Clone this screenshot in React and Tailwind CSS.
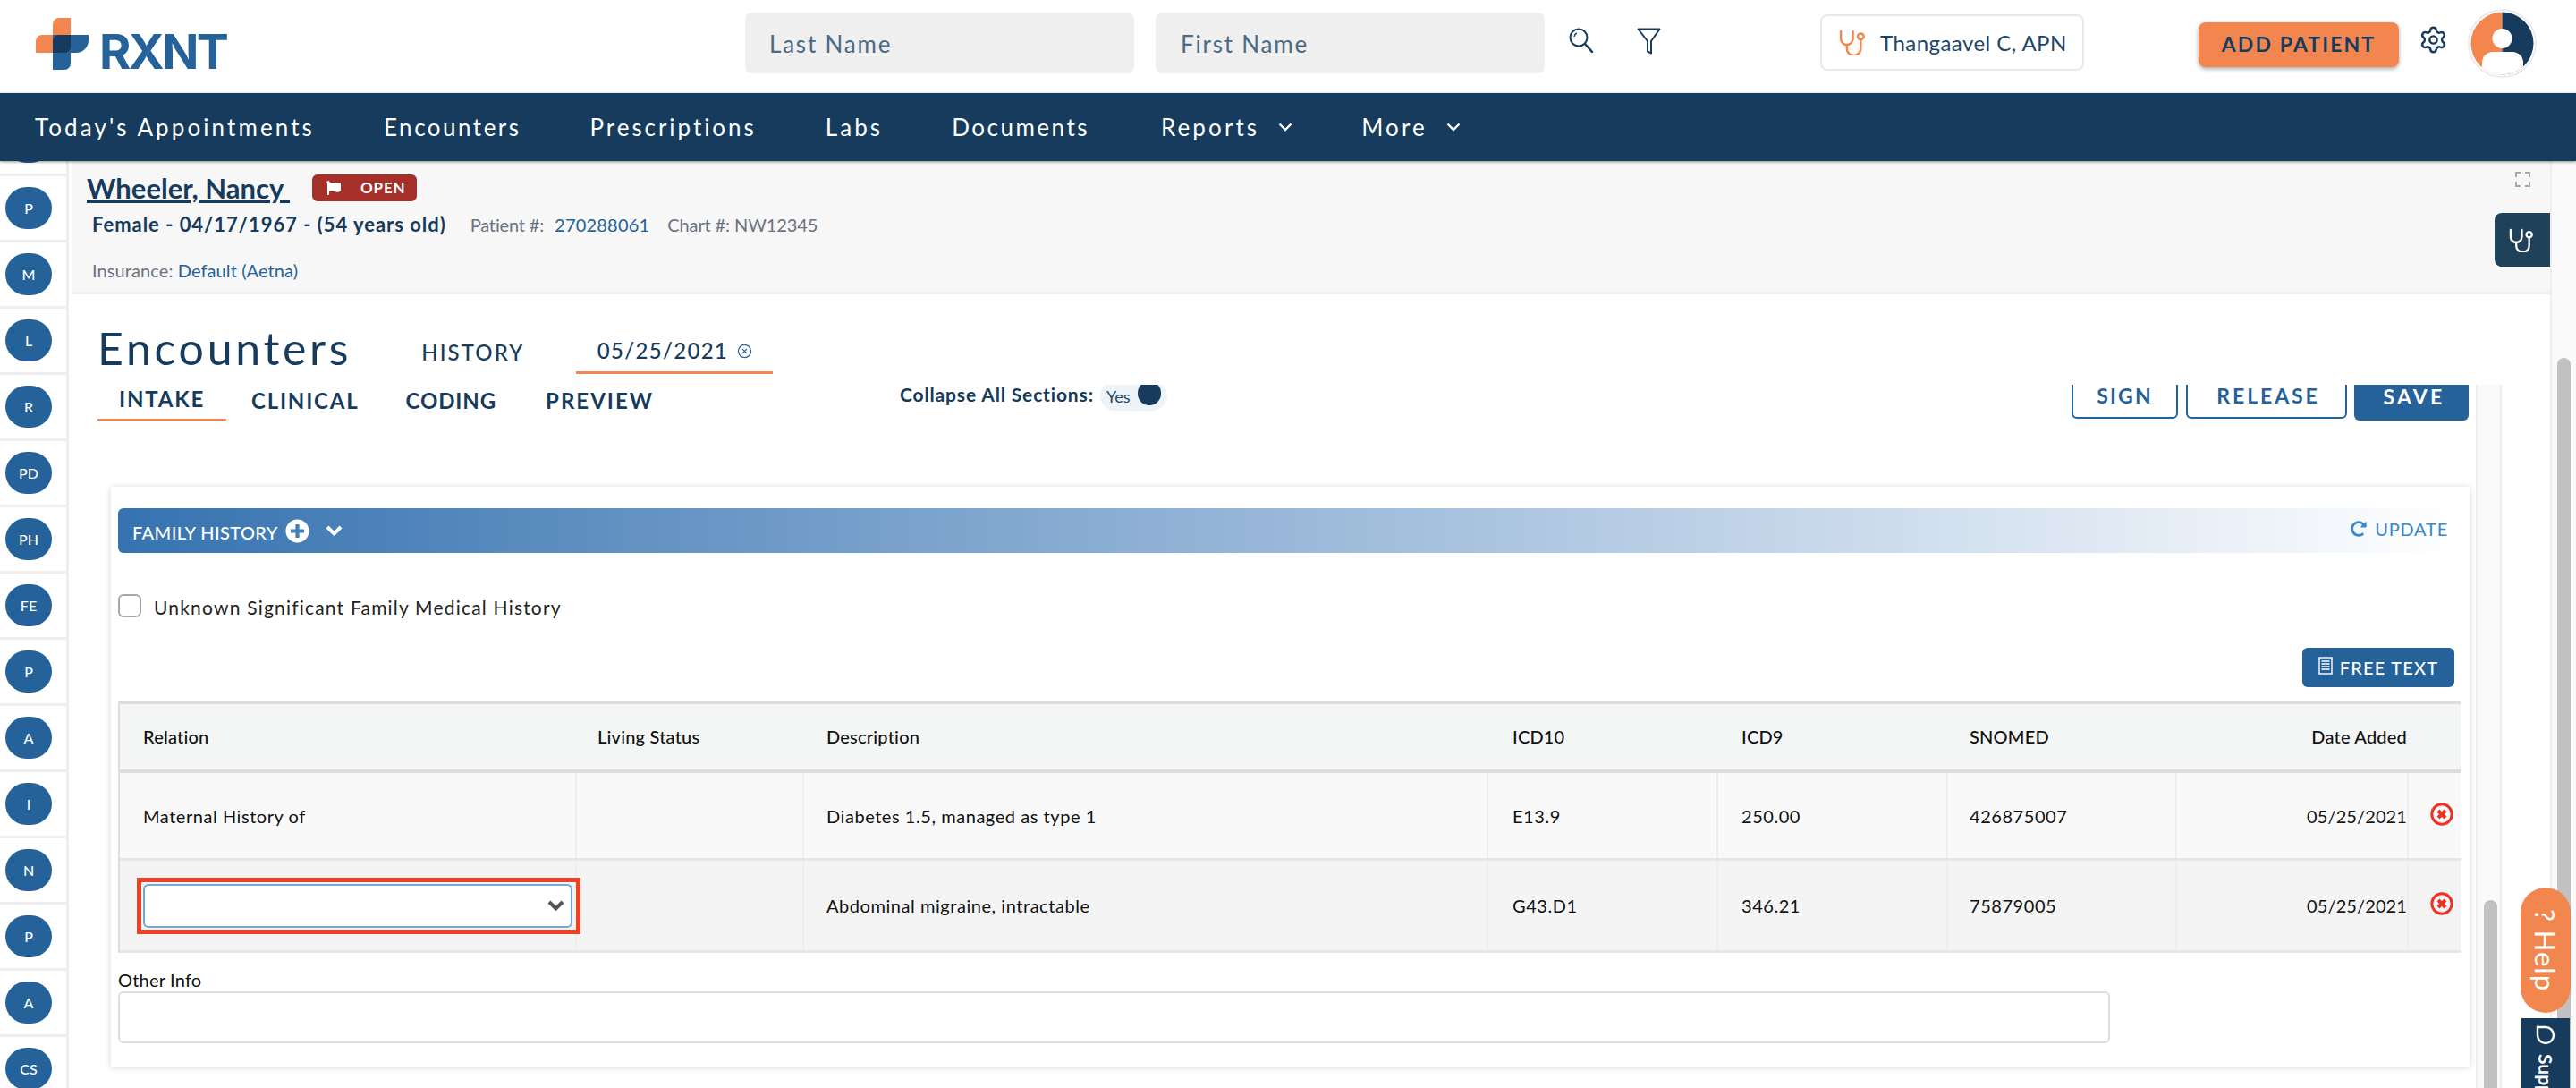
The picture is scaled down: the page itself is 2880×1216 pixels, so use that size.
import React from 'react';
import { FaFlag, FaPlusCircle, FaRedoAlt } from 'react-icons/fa';
import { Settings, CircleX } from 'lucide-react';

const SIDE = ['', 'P', 'M', 'L', 'R', 'PD', 'PH', 'FE', 'P', 'A', 'I', 'N', 'P', 'A', 'CS'];
const COLS = 'grid grid-cols-[509px_254px_765px_257px_257px_256px_259px_60px]';

function StethIcon({ className }) {
  return (
    <svg viewBox="0 0 28 28" fill="none" stroke="currentColor" strokeWidth="2.4" strokeLinecap="round" className={className}>
      <path d="M2 2v8a6.5 6.5 0 0 0 13 0V2" />
      <path d="M8.5 17v3.5a7.5 7.5 0 0 0 15 0V11" />
      <circle cx="23.5" cy="7.5" r="3.2" />
    </svg>
  );
}

function NavChevron() {
  return (
    <svg viewBox="0 0 16 10" fill="none" stroke="#fff" strokeWidth="2.4" className="w-[16px] h-[10px]">
      <path d="M1.5 1.5L8 8l6.5-6.5" />
    </svg>
  );
}

function RemoveIcon() {
  return (
    <svg viewBox="0 0 26 26" className="w-[26px] h-[26px]" fill="none" stroke="#ee3124">
      <circle cx="13" cy="13" r="11.2" strokeWidth="3" />
      <path d="M9 9l8 8M17 9l-8 8" strokeWidth="4" />
    </svg>
  );
}

function Row({ bg, h, relation, desc, icd10, icd9, snomed }) {
  const cell = 'border-l-2 border-[#eeeeee] flex items-center';
  return (
    <div className={`${COLS} ${bg} ${h} border-b-[3px] border-[#e6e6e6] text-[20px] tracking-[0.55px] text-[#111]`}>
      <div className="flex items-center pl-[19px]">{relation}</div>
      <div className={cell} />
      <div className={`${cell} pl-[25px]`}>{desc}</div>
      <div className={`${cell} pl-[27px]`}>{icd10}</div>
      <div className={`${cell} pl-[26px]`}>{icd9}</div>
      <div className={`${cell} pl-[24px]`}>{snomed}</div>
      <div className={`${cell} justify-end tracking-[0.1px]`}>05/25/2021</div>
      <div className={`${cell} pl-[24px] pb-[4px]`}><RemoveIcon /></div>
    </div>
  );
}

export default function App() {
  return (
    <div className="relative w-[2880px] h-[1216px] overflow-hidden bg-white font-[Lato,sans-serif] flex flex-col">
      {/* Top bar */}
      <div className="h-[104px] flex items-center shrink-0 pl-[40px]">
        <div className="flex items-center w-[214px] -mt-[6px]">
          <svg viewBox="0 0 60 58" className="w-[60px] h-[58px] shrink-0">
            <path d="M19 7a7 7 0 0 1 7-7h13v39H0V26a7 7 0 0 1 7-7h12z" fill="#f3864f" />
            <path d="M19 19h40v6a14 14 0 0 1-14 14H39v12a7 7 0 0 1-7 7H19z" fill="#256299" />
            <path d="M19 26a7 7 0 0 1 7-7h13v13a7 7 0 0 1-7 7H19z" fill="#163b5c" />
          </svg>
          <span className="ml-[11px] mt-[18px] font-[Inter,sans-serif] font-bold text-[54px] leading-none tracking-[-2.6px] text-[#256299]">RXNT</span>
        </div>
        <div className="ml-[579px] w-[435px] h-[68px] -mt-[8px] bg-[#efefef] rounded-lg flex items-center pl-[27px] pt-[2px] text-[26px] tracking-[1.8px] text-[#4a6a85]">Last Name</div>
        <div className="ml-[24px] w-[435px] h-[68px] -mt-[8px] bg-[#efefef] rounded-lg flex items-center pl-[28px] pt-[2px] text-[26px] tracking-[1.8px] text-[#4a6a85]">First Name</div>
        <svg viewBox="0 0 28 28" fill="none" stroke="#163b5c" strokeWidth="2" className="ml-[27px] w-[28px] h-[28px] -mt-[14px]">
          <circle cx="11" cy="11" r="9.5" />
          <path d="M18 18l8 9" strokeWidth="2.6" strokeLinecap="round" />
          <path d="M6 10a5 5 0 0 1 3-4" strokeWidth="1.4" />
        </svg>
        <svg viewBox="0 0 27 30" fill="none" stroke="#163b5c" strokeWidth="2" strokeLinejoin="round" className="ml-[48px] w-[27px] h-[30px] -mt-[13px]">
          <path d="M1.5 1.5h24L16 15v13.5l-4-2V15z" />
        </svg>
        <div className="ml-[178px] w-[295px] h-[63px] -mt-[9px] border-2 border-[#e8e8e8] rounded-lg flex items-center pl-[19px] text-[24px] tracking-[0.45px] text-[#1d4668]">
          <StethIcon className="w-[29px] h-[29px] text-[#f3864f] mr-[17px]" />
          Thangaavel C, APN
        </div>
        <div className="ml-[128px] w-[224px] h-[50px] -mt-[5px] bg-[#f3864f] rounded-lg shadow-[0_2px_5px_rgba(0,0,0,0.35)] flex items-center justify-center font-bold text-[23px] tracking-[2.1px] text-[#163b5c]">ADD PATIENT</div>
        <Settings className="ml-[22px] w-[33px] h-[33px] -mt-[15px] text-[#163b5c]" strokeWidth={1.8} />
        <svg viewBox="0 0 77 77" className="ml-[22px] w-[77px] h-[77px] -mt-[7px]">
          <defs>
            <clipPath id="avatarClip"><circle cx="38.5" cy="38.5" r="35" /></clipPath>
          </defs>
          <circle cx="38.5" cy="38.5" r="37.5" fill="#fff" stroke="#ececec" strokeWidth="2" />
          <g clipPath="url(#avatarClip)">
            <rect x="3" y="3" width="35.5" height="71" fill="#f3864f" />
            <rect x="38.5" y="3" width="36" height="71" fill="#163b5c" />
            <circle cx="38.5" cy="33" r="11" fill="#fff" />
            <path d="M16 77V60a12 12 0 0 1 12-12h22a12 12 0 0 1 12 12v17z" fill="#fff" />
            <path d="M3 60l14 18H3zM75 58L61 78h14z" fill="#fff" />
          </g>
        </svg>
      </div>

      {/* Main nav */}
      <div className="relative z-10 h-[76px] shrink-0 bg-[#163b5c] shadow-[0_1px_3px_rgba(0,0,0,0.45)] flex items-center pl-[39px] gap-[77px] text-[26px] text-white">
        <span className="tracking-[3.1px]">Today's Appointments</span>
        <span className="tracking-[2.5px]">Encounters</span>
        <span className="tracking-[2.95px]">Prescriptions</span>
        <span className="tracking-[3.1px]">Labs</span>
        <span className="tracking-[2.5px]">Documents</span>
        <span className="ml-[3px] flex items-center gap-[21px] tracking-[3.1px]">Reports <NavChevron /></span>
        <span className="flex items-center gap-[21px] tracking-[3.1px]">More <NavChevron /></span>
      </div>

      <div className="flex flex-1 min-h-0">
        {/* Section shortcuts */}
        <div className="w-[80px] shrink-0 overflow-hidden">
          <div className="-mt-[57px]">
            {SIDE.map((s, i) => (
              <div key={i} className="w-[77px] h-[74px] border-b-[3px] border-r-[3px] border-[#eeeeee] flex items-center pl-[6px]">
                <div className="w-[52px] h-[47px] rounded-full bg-[#256299] flex items-center justify-center text-[16px] font-medium text-white">{s}</div>
              </div>
            ))}
          </div>
        </div>

        <div className="w-[2771px] shrink-0 flex flex-col">
          {/* Patient banner */}
          <div className="h-[149px] shrink-0 bg-[#f7f7f7] border-b-[3px] border-[#f0f0f4] flex justify-between">
            <div className="pl-[17px] pt-[12px]">
              <div className="flex items-center">
                <span className="text-[31px] leading-[36px] font-bold underline text-[#163b5c]">Wheeler, Nancy&nbsp;</span>
                <span className="ml-[25px] w-[117px] h-[30px] rounded-md bg-[#a5302a] flex items-center pl-[16px] text-white text-[17px] font-bold tracking-[0.8px]">
                  <FaFlag className="w-[16px] h-[16px] mr-[22px]" />OPEN
                </span>
              </div>
              <div className="flex items-center ml-[6px] mt-[6px] text-[20px]">
                <span className="text-[22px] font-bold tracking-[0.97px] text-[#163b5c]">Female - 04/17/1967 - (54 years old)</span>
                <span className="ml-[27px] tracking-[-0.15px] text-[#6b7280]">Patient #:</span>
                <span className="ml-[12px] text-[#256299] tracking-[0.2px]">270288061</span>
                <span className="ml-[20px] text-[#6b7280] tracking-[-0.12px]">Chart #: NW12345</span>
              </div>
              <div className="ml-[6px] mt-[20px] text-[20px] tracking-[0.1px] text-[#6b7280]">
                Insurance: <span className="text-[#256299]">Default (Aetna)</span>
              </div>
            </div>
            <div className="flex flex-col items-end">
              <svg viewBox="0 0 17 17" fill="none" stroke="#a3a8ad" strokeWidth="2" className="w-[17px] h-[17px] mt-[12px] mr-[22px]">
                <path d="M1 6V1h5M11 1h5v5M16 11v5h-5M6 16H1v-5" />
              </svg>
              <div className="mt-[29px] w-[62px] h-[60px] bg-[#1f4159] rounded-l-lg flex items-center justify-center pr-[4px] text-white">
                <StethIcon className="w-[27px] h-[27px]" />
              </div>
            </div>
          </div>

          {/* Page title */}
          <div className="h-[101px] shrink-0 flex text-[#163b5c]">
            <span className="ml-[29px] mt-[32px] text-[50px] leading-[56px] tracking-[3.7px]">Encounters</span>
            <span className="ml-[78px] mt-[50px] text-[24px] leading-[30px] font-medium tracking-[2.1px]">HISTORY</span>
            <div className="ml-[58px] mt-[45px] w-[220px] h-[44px] border-b-[3px] border-[#f3864f] flex items-start justify-center gap-[10px] pt-[3px] text-[24px] leading-[30px] font-medium tracking-[1.3px]">
              05/25/2021
              <CircleX className="w-[17px] h-[17px] mt-[7px] text-[#256299]" strokeWidth={1.8} />
            </div>
          </div>

          <div className="flex flex-1 min-h-0">
            <div className="w-[2688px] shrink-0 overflow-hidden">
              {/* Tabs, collapse toggle, sign buttons */}
              <div className="flex items-start h-[114px] pr-[8px] text-[#163b5c]">
                <div className="ml-[29px] w-[144px] h-[40px] border-b-2 border-[#f3864f] mt-0 flex items-end justify-center pb-[7px] text-[24px] leading-[30px] font-bold tracking-[1.8px]">INTAKE</div>
                <span className="ml-[28px] mt-[3px] text-[24px] leading-[30px] font-bold tracking-[1.8px]">CLINICAL</span>
                <span className="ml-[52px] mt-[3px] text-[24px] leading-[30px] font-bold tracking-[0.9px]">CODING</span>
                <span className="ml-[55px] mt-[3px] text-[24px] leading-[30px] font-bold tracking-[2px]">PREVIEW</span>
                <span className="ml-[275px] -mt-[1px] text-[21px] leading-[24px] font-bold tracking-[0.85px]">Collapse All Sections:</span>
                <div className="ml-[7px] -mt-[4px] w-[75px] h-[33px] rounded-full bg-[#eef3f7] flex items-start justify-between px-[7px] text-[18px] leading-[26px] pt-[4px]">
                  <span className="text-[#1d4668]">Yes</span>
                  <span className="w-[26px] h-[27px] -mt-[4px] rounded-full bg-[#163b5c]" />
                </div>
                <div className="ml-auto flex items-start -mt-[14px] font-bold text-[23px] tracking-[2.2px]">
                  <div className="w-[119px] h-[52px] border-2 border-[#256299] rounded-md flex items-center justify-center text-[#256299]">SIGN</div>
                  <div className="ml-[9px] w-[180px] h-[52px] border-2 border-[#256299] rounded-md flex items-center justify-center pl-[4px] tracking-[2.9px] text-[#256299]">RELEASE</div>
                  <div className="ml-[8px] w-[128px] h-[54px] bg-[#256299] rounded-md flex items-center justify-center pl-[6px] tracking-[3.2px] text-white">SAVE</div>
                </div>
              </div>

              {/* Family history card */}
              <div className="ml-[44px] w-[2637px] h-[648px] px-[8px] bg-white shadow-[0_1px_8px_rgba(0,0,0,0.16)]">
                <div className="pt-[24px]">
                  <div className="h-[50px] w-[2618px] rounded-l-md bg-linear-to-r from-[#3573b0] to-white flex items-center pl-[16px] text-white">
                    <span className="pt-[4px] text-[20px] font-medium tracking-[0.4px]">FAMILY HISTORY</span>
                    <FaPlusCircle className="ml-[8px] w-[27px] h-[27px]" />
                    <svg viewBox="0 0 19 14" fill="none" stroke="#fff" strokeWidth="4" className="ml-[18px] w-[19px] h-[14px]">
                      <path d="M2 3l7.5 7.5L17 3" />
                    </svg>
                    <span className="ml-auto mr-[13px] -mt-[4px] flex items-center gap-[9px] text-[20px] tracking-[0.8px] text-[#3b87c9]">
                      <FaRedoAlt className="w-[18px] h-[18px]" />UPDATE
                    </span>
                  </div>
                </div>
                <div className="flex items-center h-[26px] mt-[46px]">
                  <div className="w-[26px] h-[26px] rounded-md border-2 border-[#a8a8a8]" />
                  <span className="ml-[14px] pt-[3px] text-[21px] tracking-[1.2px] text-[#222]">Unknown Significant Family Medical History</span>
                </div>
                <div className="flex justify-end mt-[34px] w-[2612px]">
                  <div className="w-[170px] h-[44px] rounded-md bg-[#256299] flex items-center justify-center gap-[8px] text-white text-[20px] font-medium tracking-[1.2px]">
                    <svg viewBox="0 0 16 20" fill="none" stroke="#fff" strokeWidth="1.4" className="w-[16px] h-[20px] -mt-[4px]">
                      <rect x="1" y="1" width="14" height="18" />
                      <path d="M3.5 5h9M3.5 8h9M3.5 11h9M3.5 14h9" strokeWidth="1.6" />
                    </svg>
                    FREE TEXT
                  </div>
                </div>

                {/* Problem table */}
                <div className="mt-[16px] w-[2619px] border-l-2 border-[#dddddd]">
                  <div className={`${COLS} h-[80px] pb-[2px] bg-[#f4f6f5] border-t-[3px] border-b-4 border-[#dddddd] text-[20px] font-medium tracking-[0.2px] text-[#111] items-center`}>
                    <span className="pl-[26px]">Relation</span>
                    <span className="pl-[25px]">Living Status</span>
                    <span className="pl-[27px]">Description</span>
                    <span className="pl-[29px]">ICD10</span>
                    <span className="pl-[28px]">ICD9</span>
                    <span className="pl-[26px]">SNOMED</span>
                    <span className="text-right">Date Added</span>
                    <span />
                  </div>
                  <Row bg="bg-[#f9f9f9]" h="h-[98px]"
                    relation={<span className="pl-[7px]">Maternal History of</span>}
                    desc="Diabetes 1.5, managed as type 1" icd10="E13.9" icd9="250.00" snomed="426875007" />
                  <Row bg="bg-[#f4f4f4]" h="h-[103px]"
                    relation={
                      <div className="relative z-10 shrink-0 w-[496px] h-[63px] border-[5px] border-[#f04124] p-[2px] pr-[4px]">
                        <div className="h-full rounded-md border-2 border-[#6ea8dc] bg-white flex items-center justify-end pr-[7px]">
                          <svg viewBox="0 0 19 12" fill="none" stroke="#555" strokeWidth="4" className="w-[19px] h-[12px]">
                            <path d="M2 2l7.5 7.5L17 2" />
                          </svg>
                        </div>
                      </div>
                    }
                    desc="Abdominal migraine, intractable" icd10="G43.D1" icd9="346.21" snomed="75879005" />
                </div>

                <div className="mt-[17px] text-[20px] leading-[26px] tracking-[0.2px] text-[#111]">Other Info</div>
                <div className="w-[2227px] h-[58px] rounded-md border-2 border-[#dedede]" />
              </div>
            </div>
            {/* Inner scrollbar */}
            <div className="w-[29px] shrink-0 bg-[#fafafa] border-x-2 border-[#eeeeee] pl-[7px] pt-[576px]">
              <div className="w-[15px] h-full rounded-t-full bg-[#c1c1c1]" />
            </div>
          </div>
        </div>

        {/* Outer scrollbar */}
        <div className="w-[29px] shrink-0 bg-[#fafafa] border-l-2 border-[#eeeeee] pl-[6px] pt-[220px]">
          <div className="w-[15px] h-full rounded-t-full bg-[#c1c1c1]" />
        </div>
      </div>

      {/* Floating widgets */}
      <div className="absolute right-[6px] top-[992px] z-20 w-[56px] h-[140px] rounded-full bg-[#f2864f] flex items-center justify-center text-white text-[31px] tracking-[1px] [writing-mode:vertical-rl]">? Help</div>
      <div className="absolute right-[7px] top-[1138px] z-20 w-[54px] h-[78px] overflow-hidden bg-[#163b5c] flex flex-col items-center pt-[7px] text-white">
        <svg viewBox="0 0 24 24" fill="none" stroke="#fff" strokeWidth="2.4" className="w-[24px] h-[24px] shrink-0">
          <path d="M3 21h9a9 9 0 1 0-9-9z" transform="rotate(90 12 12)" />
        </svg>
        <span className="mt-[9px] text-[21px] font-bold leading-[24px] [writing-mode:vertical-rl]">Support</span>
      </div>
    </div>
  );
}
